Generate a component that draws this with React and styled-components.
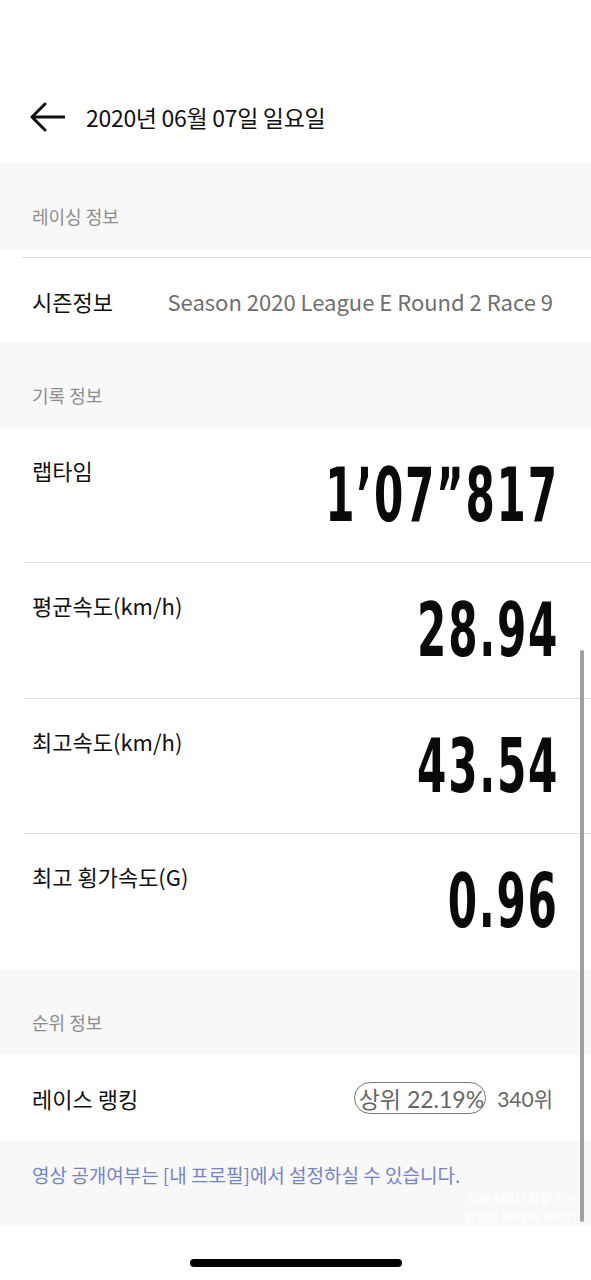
import React from 'react';
import styled, { createGlobalStyle } from 'styled-components';

const GlobalStyle = createGlobalStyle`
  html, body {
    margin: 0;
    padding: 0;
    background: #fff;
  }
  body {
    font-family: "Noto Sans CJK KR", "Noto Sans", sans-serif;
    color: #111;
  }
`;

const Screen = styled.div`
  position: relative;
  width: 591px;
  height: 1280px;
  overflow: hidden;
  background: #fff;
  display: flex;
  flex-direction: column;
`;

const Header = styled.header`
  height: 163px;
  box-sizing: border-box;
  padding: 94px 0 0 30px;
  display: flex;
  align-items: flex-start;
  gap: 21px;
`;

const BackButton = styled.button`
  width: 35px;
  height: 46px;
  padding: 0;
  border: 0;
  background: none;
  display: flex;
  align-items: center;
  justify-content: center;
`;

const Title = styled.h1`
  margin: 0;
  font-size: 23px;
  line-height: 46px;
  font-weight: 400;
  color: #111;
  letter-spacing: -0.3px;
`;

const SectionHead = styled.div`
  height: ${p => p.h || 86}px;
  box-sizing: border-box;
  background: #f8f8f8;
  display: flex;
  align-items: flex-end;
  padding: 0 0 22px 32px;
  font-size: 18px;
  line-height: 22px;
  color: #8c8c8c;
`;

const SeasonRow = styled.div`
  height: 94px;
  box-sizing: border-box;
  padding-top: 8px;
  display: flex;
  flex-direction: column;
`;

const Divider = styled.div`
  height: 1px;
  margin-left: ${p => p.inset || 22}px;
  background: #dcdcdc;
`;

const SeasonBody = styled.div`
  flex: 1;
  display: flex;
  align-items: center;
  padding: 0 38px 0 32px;
  justify-content: space-between;
`;

const Label = styled.span`
  font-size: 22px;
  line-height: 28px;
  color: #111;
`;

const SeasonValue = styled.span`
  font-size: 22px;
  line-height: 28px;
  color: #6e6e6e;
`;

const MetricRow = styled.div`
  height: ${p => p.h}px;
  box-sizing: border-box;
  margin-left: 24px;
  padding: 28px 35px 0 8px;
  display: flex;
  justify-content: space-between;
  align-items: flex-start;
  border-bottom: ${p => (p.last ? 'none' : '1px solid #dedede')};
`;

const BigValue = styled.span`
  display: inline-block;
  margin-top: -6px;
  font-family: "DejaVu Sans", sans-serif;
  font-weight: 700;
  font-size: 74px;
  line-height: 90px;
  letter-spacing: 3px;
  color: #0a0a0a;
  transform: scaleX(0.57);
  transform-origin: right center;
  margin-right: -3px;
`;

const RankRow = styled.div`
  height: 86px;
  box-sizing: border-box;
  padding: 0 38px 0 32px;
  display: flex;
  align-items: center;
  justify-content: space-between;
`;

const RankInfo = styled.div`
  display: flex;
  align-items: center;
  gap: 11px;
  font-family: Lato, "Noto Sans CJK KR", sans-serif;
  font-size: 21px;
  color: #666;
`;

const Pill = styled.span`
  display: inline-flex;
  align-items: center;
  height: 32px;
  box-sizing: border-box;
  padding: 0 1px 0 4px;
  border: 1.5px solid #777;
  border-radius: 16px;
  font-size: 23px;
`;

const Notice = styled.div`
  position: relative;
  height: 85px;
  box-sizing: border-box;
  background: #f8f8f8;
  padding: 22px 0 0 32px;
  font-size: 19px;
  line-height: 24px;
  color: #7183cf;
`;

const Watermark = styled.div`
  position: absolute;
  right: 14px;
  top: 49px;
  text-align: right;
  font-size: 12.5px;
  line-height: 18px;
  font-weight: 700;
  color: rgba(255, 255, 255, 0.92);
`;

const Footer = styled.div`
  flex: 1;
  display: flex;
  justify-content: center;
  padding-top: 33px;
`;

const HomeBar = styled.div`
  width: 212px;
  height: 8px;
  border-radius: 4px;
  background: #000;
`;

const ScrollThumb = styled.div`
  position: absolute;
  left: 580px;
  top: 650px;
  width: 4px;
  height: 572px;
  border-radius: 2px;
  background: #a0a0a0;
`;

const ArrowIcon = () => (
  <svg width="35" height="30" viewBox="0 0 35 30" fill="none">
    <path d="M34 15H3M15 2L2 15l13 13" stroke="#111" strokeWidth="3" strokeLinecap="round" strokeLinejoin="round" />
  </svg>
);

const metrics = [
  { label: '랩타임', value: '1’07”817', h: 135 },
  { label: '평균속도(km/h)', value: '28.94', h: 136 },
  { label: '최고속도(km/h)', value: '43.54', h: 135 },
  { label: '최고 횡가속도(G)', value: '0.96', h: 136, last: true },
];

export default function App() {
  return (
    <Screen>
      <GlobalStyle />
      <Header>
        <BackButton aria-label="뒤로">
          <ArrowIcon />
        </BackButton>
        <Title>2020년 06월 07일 일요일</Title>
      </Header>

      <SectionHead>레이싱 정보</SectionHead>
      <SeasonRow>
        <Divider />
        <SeasonBody>
          <Label>시즌정보</Label>
          <SeasonValue>Season 2020 League E Round 2 Race 9</SeasonValue>
        </SeasonBody>
      </SeasonRow>

      <SectionHead h={85}>기록 정보</SectionHead>
      {metrics.map(m => (
        <MetricRow key={m.label} h={m.h} last={m.last}>
          <Label>{m.label}</Label>
          <BigValue>{m.value}</BigValue>
        </MetricRow>
      ))}

      <SectionHead h={85}>순위 정보</SectionHead>
      <RankRow>
        <Label>레이스 랭킹</Label>
        <RankInfo>
          <Pill>상위 22.19%</Pill>
          <span>340위</span>
        </RankInfo>
      </RankRow>

      <Notice>
        영상 공개여부는 [내 프로필]에서 설정하실 수 있습니다.
        <Watermark>
          일상속에서 꿈을 꾸는
          <br />
          평범한 30대의 이야기
        </Watermark>
      </Notice>

      <Footer>
        <HomeBar />
      </Footer>
      <ScrollThumb />
    </Screen>
  );
}
